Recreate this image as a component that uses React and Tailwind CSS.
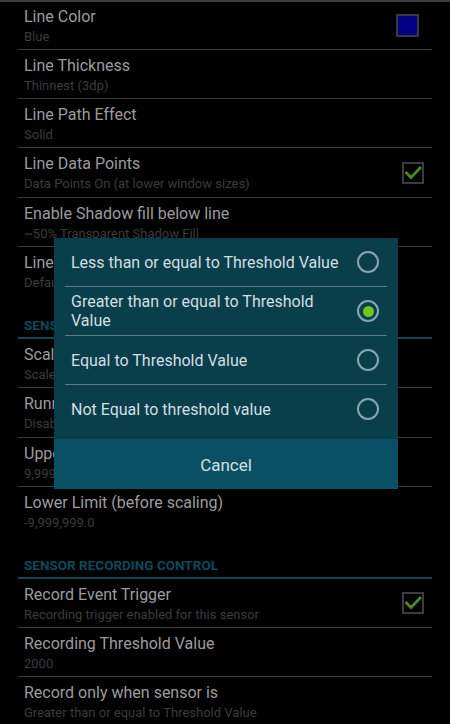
import React from "react";

const font = { fontFamily: "Roboto, 'Noto Sans', sans-serif" };

function Checkbox() {
  return (
    <div className="w-[22px] h-[22px] border-2 border-[#3c3c3c] mr-[8px] flex items-center justify-center shrink-0">
      <svg width="18" height="18" viewBox="0 0 18 18">
        <polyline points="2.5,9 7,13.5 16,4" fill="none" stroke="#4d8a1c" strokeWidth="2.8" strokeLinecap="square" />
      </svg>
    </div>
  );
}

function Swatch() {
  return <div className="w-[23px] h-[23px] border-2 border-[#3a3a3a] bg-[#020287] mr-[13px] shrink-0" />;
}

function Row({ title, sub, right, h = "h-[49px]", pt = "pt-[6px]", border = true }) {
  return (
    <div className={`${h} flex items-center ${border ? "border-b border-[#3a3a3a]" : ""}`}>
      <div className={`flex-1 self-start pl-[6px] ${pt}`}>
        <div className="text-[16px] leading-[20px] text-[#9c9c9c] whitespace-nowrap">{title}</div>
        <div className="text-[13px] leading-[16px] mt-[2px] text-[#3c3c3c] whitespace-nowrap">{sub}</div>
      </div>
      {right}
    </div>
  );
}

function Header({ text }) {
  return (
    <div className="h-[44px] pt-[22px] flex flex-col">
      <div className="pl-[6px] text-[13.5px] leading-[16px] font-bold text-[#0d4a5c]">{text}</div>
      <div className="mt-auto h-[2px] bg-[#0e4656]" />
    </div>
  );
}

function Radio({ checked }) {
  return (
    <div className="w-[22px] h-[22px] rounded-full border-2 border-[#88a6ae] flex items-center justify-center shrink-0">
      {checked && <div className="w-[11px] h-[11px] rounded-full bg-[#78c41c]" />}
    </div>
  );
}

function Option({ children, checked }) {
  return (
    <div className="h-[48px] flex items-center pl-[17px] pr-[19px]">
      <div className="flex-1 text-[16px] leading-[19px] text-[#d3dfe2]">{children}</div>
      <Radio checked={checked} />
    </div>
  );
}

function Divider() {
  return <div className="mx-[11px] h-[1px] bg-[#5d7d85]" />;
}

export default function App() {
  return (
    <div className="relative w-[450px] h-[724px] overflow-hidden bg-black" style={font}>
      <div className="h-[2px] bg-[#3c3c3c]" />
      <div className="mx-[18px]">
        <Row title="Line Color" sub="Blue" right={<Swatch />} h="h-[48px]" pt="pt-[5px]" />
        <Row title="Line Thickness" sub="Thinnest (3dp)" />
        <Row title="Line Path Effect" sub="Solid" />
        <Row title="Line Data Points" sub="Data Points On (at lower window sizes)" right={<Checkbox />} h="h-[50px]" />
        <Row title="Enable Shadow fill below line" sub="~50% Transparent Shadow Fill" />
        <Row title="Line Graph Style" sub="Default" border={false} h="h-[48px]" />
        <Header text="SENSOR VALUE SCALING" />
        <Row title="Scale Factor" sub="Scale value by 1.0" />
        <Row title="Running Average" sub="Disabled" h="h-[50px]" />
        <Row title="Upper Limit (before scaling)" sub="9,999,999.0" />
        <Row title="Lower Limit (before scaling)" sub="-9,999,999.0" border={false} h="h-[48px]" />
        <Header text="SENSOR RECORDING CONTROL" />
        <Row title="Record Event Trigger" sub="Recording trigger enabled for this sensor" right={<Checkbox />} />
        <Row title="Recording Threshold Value" sub="2000" />
        <Row title="Record only when sensor is" sub="Greater than or equal to Threshold Value" border={false} h="h-[48px]" />
      </div>

      <div className="absolute left-[54px] top-[238px] w-[344px] bg-[#093e4b] flex flex-col">
        <Option>Less than or equal to Threshold Value</Option>
        <Divider />
        <Option checked>Greater than or equal to Threshold Value</Option>
        <Divider />
        <Option>Equal to Threshold Value</Option>
        <Divider />
        <Option>Not Equal to threshold value</Option>
        <div className="h-[6px]" />
        <div className="h-[50px] pt-[3px] bg-[#0a5064] flex items-center justify-center text-[17px] text-[#d3e0e3]">
          Cancel
        </div>
      </div>
    </div>
  );
}
